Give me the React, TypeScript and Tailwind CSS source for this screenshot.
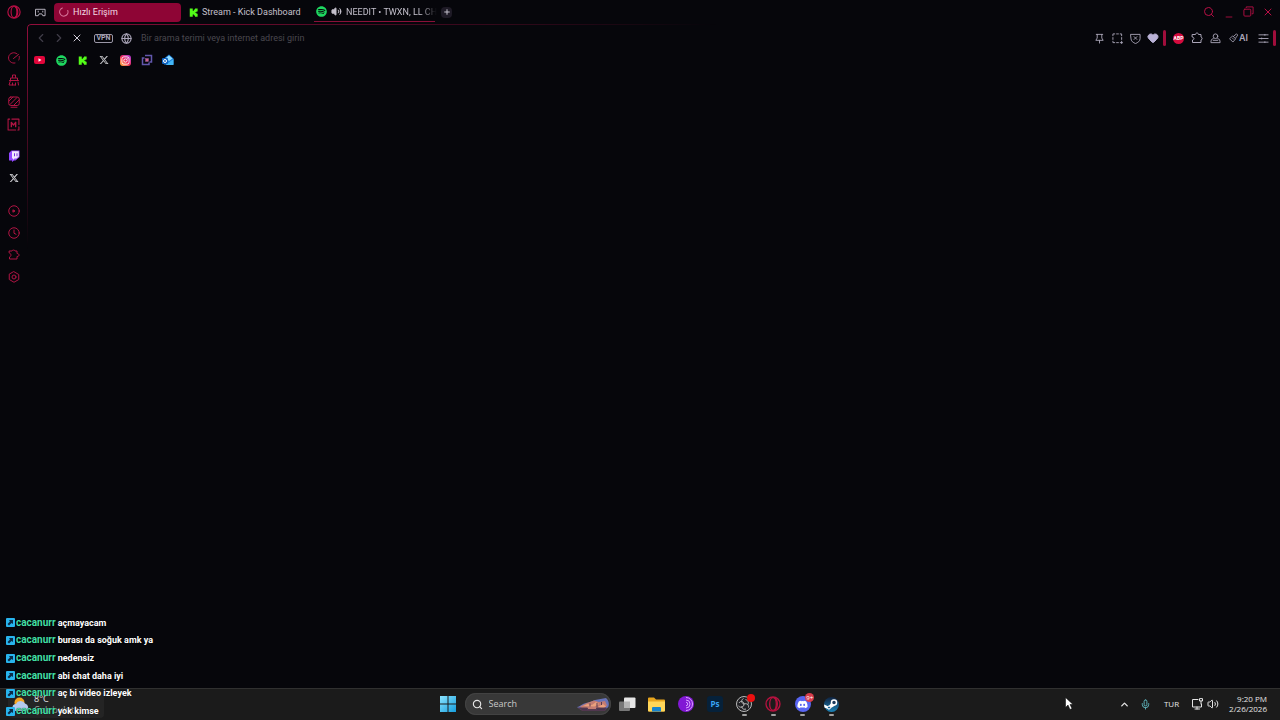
import React, { useState } from 'react';
import { FaXTwitter, FaDiscord, FaInstagram, FaSpotify } from 'react-icons/fa6';
import {
  ChevronLeft, ChevronRight, ChevronUp, X, Globe, Plus, Search, Minus, Heart, Volume2, Mic,
} from 'lucide-react';

const messages = [
  'açmayacam',
  'burası da soğuk amk ya',
  'nedensiz',
  'abi chat daha iyi',
  'aç bi video izleyek',
  'yok kimse',
];

const Line = ({ children, className = 'size-3', box = '0 0 24 24', width = 2 }: any) => (
  <svg className={className} viewBox={box} fill="none" stroke="currentColor" strokeWidth={width} strokeLinecap="round" strokeLinejoin="round">
    {children}
  </svg>
);

const OperaIcon = ({ className }: { className: string }) => (
  <Line className={className}>
    <circle cx="12" cy="12" r="10.5" />
    <ellipse cx="12" cy="12" rx="5" ry="9.5" />
    <path d="M14 2.500c6 4 6 15 0 19" />
  </Line>
);

const KickIcon = ({ className }: { className: string }) => (
  <svg className={className} viewBox="0 0 24 24" fill="#53fc18">
    <path d="M2 1h8v6h3V4h3V1h7v8h-3v2h-3v2h3v2h3v8h-7v-3h-3v-3h-3v6H2z" />
  </svg>
);

const SpotifyIcon = ({ className }: { className: string }) => (
  <FaSpotify className={`${className} text-[#1ed760]`} />
);

const SideButton = ({ label, children }: any) => (
  <button aria-label={label} className="flex h-[22px] w-full items-center justify-center">
    {children}
  </button>
);

const Sidebar = () => (
  <nav aria-label="Kenar çubuğu" className="flex w-[27px] shrink-0 flex-col text-[#b01544]">
    <button aria-label="Opera" className="flex h-6 items-center justify-center text-[#b80f45]">
      <OperaIcon className="size-[14px]" />
    </button>
    <div className="mt-[23px]">
      <SideButton label="GX Control">
        <Line>
          <path d="M14 22A10.500 10.500 0 1 1 18 3.500M22.500 9c.5 3 0 5-1 7M11 13l10-8" />
        </Line>
      </SideButton>
      <SideButton label="GX Cleaner">
        <Line>
          <path d="M9 7V2h6v5M5 13V8h14v5M3 13h18M5 13l-3 9h13M9 18v4M15 18v4M20 16l1 6" />
        </Line>
      </SideButton>
      <SideButton label="Wallpaper">
        <Line>
          <rect x="1.500" y="2" width="21" height="17" rx="4" />
          <path d="M6 22.500h12M2 10l8-8M4 17 18 3M12 18l10-10" />
        </Line>
      </SideButton>
      <SideButton label="Mods">
        <Line className="size-[13px]">
          <path d="M5 2H2v20h14M20 22h2v-6M22 12V2H9" />
          <path d="M8 16V8l4 5 4-5v8" width="3" strokeWidth="2.500" />
        </Line>
      </SideButton>
    </div>
    <div className="mt-[10px]">
      <SideButton label="Twitch">
        <svg className="size-3" viewBox="0 0 24 24">
          <path d="M2 6 7 1h16v13l-8 7h-3l-4 3v-3H2z" fill="#9147ff" />
          <path d="M8 2.500h13.500V13L17 17h-4l-3 3v-3H8z" fill="#f1eaff" />
          <path d="M12 6.500h2v6h-2zM17 6.500h2v6h-2z" fill="#7630e0" />
        </svg>
      </SideButton>
      <SideButton label="X">
        <FaXTwitter className="size-[10px] text-[#d4d4d8]" />
      </SideButton>
    </div>
    <div className="mt-[11px]">
      <SideButton label="Player">
        <Line>
          <circle cx="12" cy="12" r="10.500" />
          <path d="m10.500 10 3.500 2-3.500 2z" fill="currentColor" />
        </Line>
      </SideButton>
      <SideButton label="Geçmiş">
        <Line>
          <circle cx="12" cy="12" r="10.500" />
          <path d="M12 6v6.500l4 2" />
        </Line>
      </SideButton>
      <SideButton label="Uzantılar">
        <Line>
          <path d="M3 4h5c0-2.500 6-2.500 6 0h4v5c5 0 6 6 0 6v5H3v-4c4-1 4-7 0-8z" />
        </Line>
      </SideButton>
      <SideButton label="Ayarlar">
        <Line>
          <path d="M12 1.500 21.500 7v10L12 22.500 2.500 17V7z" />
          <circle cx="12" cy="12" r="4" />
        </Line>
      </SideButton>
    </div>
  </nav>
);

const TabStrip = () => (
  <header className="flex h-6 items-center text-[9px] leading-3 text-[#c4c0cc]">
    <button aria-label="GX Corner" className="flex h-6 w-[27px] items-center justify-center">
      <Line className="size-[11px]">
        <path d="M2 5h20v14h-5l-2-4H9l-2 4H2zM7 9v2M17 9v2" />
      </Line>
    </button>
    <button className="flex h-[19px] w-[127px] items-center gap-1 rounded-sm bg-[#8e0535] pl-[5px] text-[#f3dbe4]">
      <Line className="size-[10px] text-[#d8759a]" width={2.5}>
        <path d="M8 2.500a10 10 0 1 0 13 6" />
      </Line>
      <span>Hızlı Erişim</span>
    </button>
    <button className="flex h-[19px] w-[133px] items-center gap-1 pl-2">
      <KickIcon className="size-[9px]" />
      <span className="whitespace-nowrap">Stream - Kick Dashboard</span>
    </button>
    <button className="flex h-[19px] w-[121px] items-center gap-1 border-b border-[#8a1039] pl-[2px]">
      <SpotifyIcon className="size-[11px] shrink-0" />
      <Volume2 className="size-[11px] shrink-0 fill-current" />
      <span className="whitespace-nowrap [mask-image:linear-gradient(to_right,black_82%,transparent)]">
        NEEDIT • TWXN, LL CH
      </span>
    </button>
    <button aria-label="Yeni sekme" className="ml-[6px] flex size-[11px] items-center justify-center rounded-sm bg-[#1e1a26]">
      <Plus className="size-2" strokeWidth={3} />
    </button>
    <div className="ml-auto flex text-[#b80f45]">
      <button aria-label="Sekme ara" className="flex w-5 justify-center">
        <Search className="size-3" />
      </button>
      <button aria-label="Küçült" className="flex w-[19px] items-end justify-center">
        <Minus className="size-[10px] translate-y-1" />
      </button>
      <button aria-label="Geri yükle" className="flex w-5 justify-center">
        <Line className="size-[11px]">
          <rect x="2" y="7" width="15" height="15" rx="2" />
          <path d="M7 3.500V2h15v15h-2" />
        </Line>
      </button>
      <button aria-label="Kapat" className="mr-[2px] flex w-5 justify-center">
        <X className="size-3" />
      </button>
    </div>
  </header>
);

const ToolButton = ({ label, children }: any) => (
  <button aria-label={label} className="flex h-5 w-[18px] items-center justify-center">
    {children}
  </button>
);

const Toolbar = () => {
  const [address, setAddress] = useState('');

  return (
    <div className="flex h-[26px] items-center pl-[5px] text-[#aaa5b8]">
      <button aria-label="Geri" className="flex w-[18px] justify-center text-[#403d49]">
        <ChevronLeft className="size-[14px]" />
      </button>
      <button aria-label="İleri" className="flex w-[18px] justify-center text-[#403d49]">
        <ChevronRight className="size-[14px]" />
      </button>
      <button aria-label="Durdur" className="flex w-[18px] justify-center text-[#d0ccd8]">
        <X className="size-3" />
      </button>
      <button className="ml-2 h-[9px] w-[19px] rounded-xs border border-[#9a96a6] text-[7px] leading-[7px] font-bold">
        VPN
      </button>
      <Globe className="ml-2 size-[11px]" strokeWidth={2.5} />
      <input
        aria-label="Adres"
        value={address}
        onChange={(e) => setAddress(e.target.value)}
        placeholder="Bir arama terimi veya internet adresi girin"
        className="ml-[9px] min-w-0 flex-1 bg-transparent text-[9px] leading-3 outline-none placeholder:text-[#4a484f]"
      />
      <ToolButton label="Sabitle">
        <Line className="size-[11px]">
          <path d="M5 3h14M7 3v8l-3 5h16l-3-5V3M12 16v6" />
        </Line>
      </ToolButton>
      <ToolButton label="Anlık görüntü">
        <Line className="size-[11px]">
          <path d="M2 6V2h4M10 2h4M18 2h3v4M2 10v4M2 18v3h4M10 21h4M21 10v4M18 21h5M21 18v5" />
        </Line>
      </ToolButton>
      <ToolButton label="Reklam engelleyici">
        <Line className="size-[11px]">
          <path d="M2 3h20v9c0 6-5 9-10 11C7 21 2 18 2 12zM9 8l6 6M15 8l-6 6" />
        </Line>
      </ToolButton>
      <ToolButton label="Yer imi">
        <Heart className="size-3 fill-current text-[#b9b1d6]" />
      </ToolButton>
      <span className="ml-px h-4 w-[3px] rounded-full bg-[#a00d3b]" />
      <button aria-label="Adblock Plus" className="ml-[7px] flex size-[11px] items-center justify-center rounded-full bg-[#d50b3e] text-[5px] leading-none font-bold text-white">
        ABP
      </button>
      <span className="w-1" />
      <ToolButton label="Uzantılar">
        <Line>
          <path d="M3 5h6c0-4 6-4 6 0h5v5c3 1 3 5 0 6v5H3v-5c4 0 4-6 0-6z" />
        </Line>
      </ToolButton>
      <ToolButton label="Profil">
        <Line className="size-[11px]">
          <circle cx="12" cy="7" r="5" />
          <path d="M7 12c-4 1-5 4-5 9h20c0-5-1-8-5-9M7 16h10" />
        </Line>
      </ToolButton>
      <button aria-label="Opera AI" className="ml-[5px] flex w-5 items-center font-[Inter,sans-serif] text-[9px] leading-3 font-semibold">
        <Line className="size-[10px] shrink-0">
          <path d="M2 13 9 7l7 7-6 7zM11 8l7-6 3 3-5 7M9 13l2 2" />
        </Line>
        AI
      </button>
      <button aria-label="Kolay kurulum" className="ml-1 flex w-5 justify-center">
        <Line className="size-[11px]">
          <path d="M2 4h20M2 12h20M2 20h20M15 3v2M8 11v2M15 19v2" />
        </Line>
      </button>
      <span className="mr-1 h-4 w-[3px] rounded-full bg-[#a00d3b]" />
    </div>
  );
};

const Bookmarks = () => (
  <div className="ml-[2px] grid h-[18px] w-[150px] grid-cols-7 place-items-center">
    <a href="#youtube" aria-label="YouTube">
      <svg className="h-[8px] w-[11px]" viewBox="0 0 22 16">
        <rect width="22" height="16" rx="4" fill="#e2063b" />
        <path d="m9 4.500 6 3.500-6 3.500z" fill="white" />
      </svg>
    </a>
    <a href="#spotify" aria-label="Spotify"><SpotifyIcon className="size-[11px]" /></a>
    <a href="#kick" aria-label="Kick"><KickIcon className="size-[9px]" /></a>
    <a href="#x" aria-label="X"><FaXTwitter className="size-[10px] text-[#c4c4c8]" /></a>
    <a href="#instagram" aria-label="Instagram" className="flex size-[11px] items-center justify-center rounded-[3px] bg-linear-to-tr from-[#ffb32c] via-[#f0275f] to-[#a72be0]">
      <FaInstagram className="size-[9px] text-white" />
    </a>
    <a href="#panel" aria-label="Panel">
      <svg className="size-3" viewBox="0 0 24 24" fill="none" stroke="#6257ad" strokeWidth="3">
        <path d="M8 3h13v13h-4M7 8H3v13h13v-4" />
        <rect x="9" y="9" width="6" height="6" fill="#d0638c" stroke="#8a5aa8" strokeWidth="1" />
      </svg>
    </a>
    <a href="#outlook" aria-label="Outlook">
      <svg className="size-3" viewBox="0 0 24 24">
        <path d="M4 9 14 1l9 8v12H4z" fill="#1b80de" />
        <path d="m8 8 6-5 7 6-7 5z" fill="#8fdcff" />
        <path d="M23 10v12H7z" fill="#43b6f6" />
        <rect y="8" width="12" height="12" rx="2" fill="#0f62c0" />
        <circle cx="6" cy="14" r="3" fill="none" stroke="white" strokeWidth="2" />
      </svg>
    </a>
  </div>
);

const TaskButton = ({ label, running, children }: any) => (
  <button aria-label={label} className="relative flex h-[30px] items-center justify-center">
    {children}
    {running && <span className="absolute bottom-[3px] h-[2px] w-[5px] rounded-full bg-[#a0a0a0]" />}
  </button>
);

const Taskbar = () => (
  <footer className="grid h-8 shrink-0 grid-cols-[1fr_auto_1fr] items-center border-t border-[#303030] bg-[#1b1b1b] pb-px font-['Open_Sans',sans-serif] text-[#e4e4e4]">
    <button className="ml-2 flex h-[27px] w-24 items-center gap-1 rounded-sm bg-[#242424] pl-1 text-left text-[9px] leading-[11px]">
      <svg className="h-4 w-[18px]" viewBox="0 0 36 32">
        <circle cx="15" cy="13" r="10" fill="#f5a623" />
        <path d="M8 30a7 7 0 0 1 0-14 10 10 0 0 1 18-1 8 8 0 0 1 2 15z" fill="#b4c9ee" />
      </svg>
      <span>
        8°C
        <span className="block text-[#9a9a9a]">Çok bulutlu</span>
      </span>
    </button>
    <div className="flex items-center">
      <button aria-label="Start" className="flex w-[29px] justify-center">
        <svg className="size-4" viewBox="0 0 16 16">
          <defs>
            <linearGradient id="win" x2="1" y2="1">
              <stop stopColor="#8be4ff" />
              <stop offset="1" stopColor="#159ddd" />
            </linearGradient>
          </defs>
          <path d="M0 0h7.500v7.500H0zM8.500 0H16v7.500H8.500zM0 8.500h7.500V16H0zM8.500 8.500H16V16H8.500z" fill="url(#win)" />
        </svg>
      </button>
      <label className="mx-[2px] flex h-[22px] w-[146px] items-center rounded-full bg-[#383838] pr-px pl-[7px] ring-1 ring-[#424242] ring-inset">
        <Search className="size-[11px] shrink-0" strokeWidth={2.5} />
        <input aria-label="Search" placeholder="Search" className="ml-[6px] w-0 flex-1 bg-transparent text-[9px] leading-3 outline-none placeholder:text-[#c9c9c9]" />
        <svg className="h-[14px] w-[33px]" viewBox="0 0 66 28">
          <path d="M0 20c8-1 12-9 24-9l12-5 22-4c5 4 7 11 5 17l-6 7H8z" fill="#6873b8" />
          <path d="M6 19 20 12l14-5 10 3 12-2 4 9-10 8H14z" fill="#c47c72" />
          <path d="m12 18 9-4 9 2 8-6 6 4-9 5zM42 20l10-6 6 5-6 4z" fill="#eba17d" />
          <path d="M3 22h18v3h18v-3h20l-4 6H12zM26 13v6M40 12v9M49 10v6" fill="#4a344f" stroke="#593b51" strokeWidth="2" />
        </svg>
      </label>
      <div className="grid w-[234px] grid-cols-8">
        <TaskButton label="Task View">
          <svg className="h-[15px] w-[17px]" viewBox="0 0 34 30">
            <rect y="9" width="22" height="19" rx="2" fill="#777" />
            <rect x="10" y="1" width="23" height="21" rx="2" fill="#e6e6e6" />
            <path d="M10 9h12v13H10z" fill="#b4b4b4" />
          </svg>
        </TaskButton>
        <TaskButton label="File Explorer">
          <svg className="h-[15px] w-[17px]" viewBox="0 0 34 30">
            <path d="M0 3q0-2 2-2h10l4 4h16q2 0 2 2v20q0 2-2 2H2q-2 0-2-2z" fill="#e8a51e" />
            <path d="M0 9h34v18q0 2-2 2H2q-2 0-2-2z" fill="#ffd659" />
            <path d="M8 29v-7q0-2 2-2h14q2 0 2 2v7z" fill="#1683ce" />
          </svg>
        </TaskButton>
        <TaskButton label="Tor Browser">
          <svg className="size-4" viewBox="0 0 32 32" fill="none" stroke="#d9a3ff" strokeWidth="2">
            <circle cx="16" cy="16" r="16" fill="#8218d5" stroke="none" />
            <path d="M16 3a13 13 0 0 1 0 26M16 8a8 8 0 0 1 0 16M16 12.500a3.500 3.500 0 0 1 0 7" />
          </svg>
        </TaskButton>
        <TaskButton label="Photoshop">
          <span className="flex size-4 items-center justify-center rounded-[3px] bg-[#06213a] text-[8px] leading-none font-bold text-[#3aa5f5]">Ps</span>
        </TaskButton>
        <TaskButton label="OBS Studio" running>
          <svg className="size-4" viewBox="0 0 32 32" fill="none" stroke="#b9b9b9" strokeWidth="2">
            <circle cx="16" cy="16" r="15" fill="#202024" />
            <path d="M15 5c-6 3-4 10 1 11M16 16c5-2 10 1 9 7M16 16c0 6-6 9-11 4M19 7c6 2 7 7 4 11M6 14c3-5 9-4 10 2M20 26c-6 2-9-2-8-6" />
          </svg>
          <span className="absolute top-[5px] right-1 size-2 rounded-full bg-[#ec1010]" />
        </TaskButton>
        <TaskButton label="Opera GX" running>
          <OperaIcon className="size-4 text-[#b5123f]" />
        </TaskButton>
        <TaskButton label="Discord" running>
          <span className="flex size-4 items-center justify-center rounded-full bg-[#5865f2]">
            <FaDiscord className="size-[11px] text-white" />
          </span>
          <span className="absolute top-1 right-[3px] flex size-[9px] items-center justify-center rounded-full bg-[#d83c4b] text-[6px] leading-none text-white">9+</span>
        </TaskButton>
        <TaskButton label="Steam" running>
          <svg className="size-[15px]" viewBox="0 0 30 30">
            <defs>
              <linearGradient id="steam" x2="0" y2="1">
                <stop stopColor="#10223f" />
                <stop offset="1" stopColor="#1b83b8" />
              </linearGradient>
            </defs>
            <circle cx="15" cy="15" r="15" fill="url(#steam)" />
            <path d="M0 15l9 4 6-8 7 6-8 5-4 3-9-4z" fill="white" />
            <circle cx="20" cy="11" r="5" fill="#1a3a5d" stroke="white" strokeWidth="3" />
            <circle cx="10" cy="21" r="3" fill="#1a6496" stroke="white" strokeWidth="2" />
          </svg>
        </TaskButton>
      </div>
    </div>
    <div className="flex items-center justify-end pr-[13px] text-[8px] leading-[10px]">
      <button aria-label="Show hidden icons"><ChevronUp className="size-[11px]" strokeWidth={3} /></button>
      <Mic className="ml-[10px] size-[11px] text-[#62bcc4]" />
      <button className="ml-[13px]">TUR</button>
      <button aria-label="Network and volume" className="ml-3 flex gap-1">
        <Line className="size-3">
          <path d="M14 3H3v15h18v-6M8 22h9M12 18v4M17 2v4h6V2zM20 6v6" />
        </Line>
        <Volume2 className="size-3" />
      </button>
      <button className="ml-[10px] text-right">
        9:20 PM<br />2/26/2026
      </button>
    </div>
  </footer>
);

const Chat = () => (
  <ul className="pointer-events-none absolute bottom-0 left-[6px] grid h-[106px] grid-rows-6 font-bold [text-shadow:0_0_1px_black]">
    {messages.map((message) => (
      <li key={message} className="flex items-center whitespace-nowrap">
        <svg className="size-[9px]" viewBox="0 0 18 18">
          <rect width="18" height="18" rx="2" fill="#28b4ee" />
          <path d="M6 4h8v8l-3-2-5 5-3-3 5-5z" fill="#0b2b47" />
        </svg>
        <span className="ml-px text-[10px] leading-3 text-[#43dfa6]">cacanurr</span>
        <span className="ml-[2px] text-[9px] leading-3 text-white">{message}</span>
      </li>
    ))}
  </ul>
);

const App = () => {
  return (
    <div className="relative flex h-screen flex-col overflow-hidden bg-[#06060b] font-[Roboto,sans-serif]">
      <div className="flex min-h-0 flex-1">
        <Sidebar />
        <div className="flex min-w-0 flex-1 flex-col">
          <TabStrip />
          <main className="relative flex-1 pt-px">
            {/* Glowing edge that fades away from the corner */}
            <div className="pointer-events-none absolute inset-0 rounded-tl border-t border-l border-[#930e3c] [mask-image:radial-gradient(ellipse_690px_225px_at_0_0,black,transparent)]" />
            <Toolbar />
            <Bookmarks />
          </main>
        </div>
      </div>
      <Taskbar />
      <Chat />
      {/* Mouse pointer */}
      <svg className="pointer-events-none absolute right-[207px] bottom-[10px] h-[13px] w-2" viewBox="0 0 16 26">
        <path d="M1 1v20l5-5 4 9 4-2-4-8h6z" fill="white" stroke="black" />
      </svg>
    </div>
  );
};

export default App;
